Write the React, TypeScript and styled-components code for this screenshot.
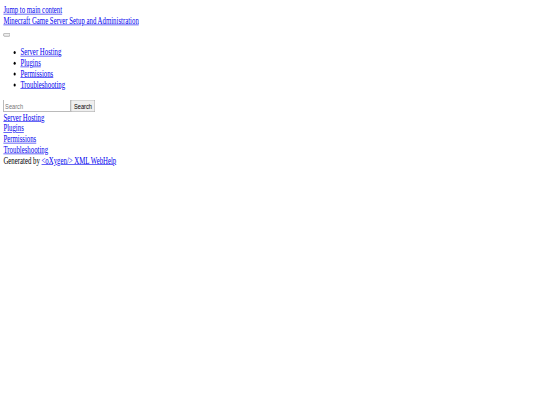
import styled, { createGlobalStyle } from "styled-components";

const GlobalStyle = createGlobalStyle`
  html, body {
    margin: 0;
    padding: 0;
    background: #ffffff;
    overflow: hidden;
  }
`;

const tocItems = ["Server Hosting", "Plugins", "Permissions", "Troubleshooting"];

export default function App(): JSX.Element {
  return (
    <>
      <GlobalStyle />
      <Page>
        <Header>
          <TextLink href="#main">Jump to main content</TextLink>
          <br />
          <TextLink href="#">Minecraft Game Server Setup and Administration</TextLink>
        </Header>
        <Nav>
          <MenuToggle type="button" aria-label="Toggle menu" />
          <MenuList>
            {tocItems.map((item) => (
              <li key={item}>
                <TextLink href="#">{item}</TextLink>
              </li>
            ))}
          </MenuList>
        </Nav>
        <SearchForm onSubmit={(e) => e.preventDefault()}>
          <SearchInput type="text" placeholder="Search" />
          <SearchButton type="submit">Search</SearchButton>
        </SearchForm>
        <Toc>
          {tocItems.map((item) => (
            <TocEntry key={item}>
              <TextLink href="#">{item}</TextLink>
            </TocEntry>
          ))}
        </Toc>
        <Footer>
          Generated by <TextLink href="#">&lt;oXygen/&gt; XML WebHelp</TextLink>
        </Footer>
      </Page>
    </>
  );
}

// the shot is an unstyled page squashed to the window, so scale it the same way
const Page = styled.div`
  width: 1254px;
  padding: 8px;
  font-family: "Liberation Serif", "Times New Roman", serif;
  font-size: 16px;
  line-height: normal;
  color: #000000;
  transform: scale(0.425, 0.6);
  transform-origin: top left;
`;

const Header = styled.header`
  display: block;
`;

const TextLink = styled.a`
  color: #0000ee;
  text-decoration: underline;
`;

const Nav = styled.nav`
  display: block;
`;

const MenuToggle = styled.button`
  font: 13.333px "Liberation Sans", Arial, sans-serif;
  padding: 1px 6px;
  vertical-align: baseline;
`;

const MenuList = styled.ul`
  margin: 16px 0;
  padding-left: 40px;
  list-style: disc;
`;

const SearchForm = styled.form`
  display: block;
  margin: 0;
`;

const SearchInput = styled.input`
  width: 150px;
  font: 13.333px "Liberation Sans", Arial, sans-serif;
`;

const SearchButton = styled.button`
  font: 13.333px "Liberation Sans", Arial, sans-serif;
`;

const Toc = styled.div`
  display: block;
`;

const TocEntry = styled.div`
  display: block;
`;

const Footer = styled.footer`
  display: block;
`;
